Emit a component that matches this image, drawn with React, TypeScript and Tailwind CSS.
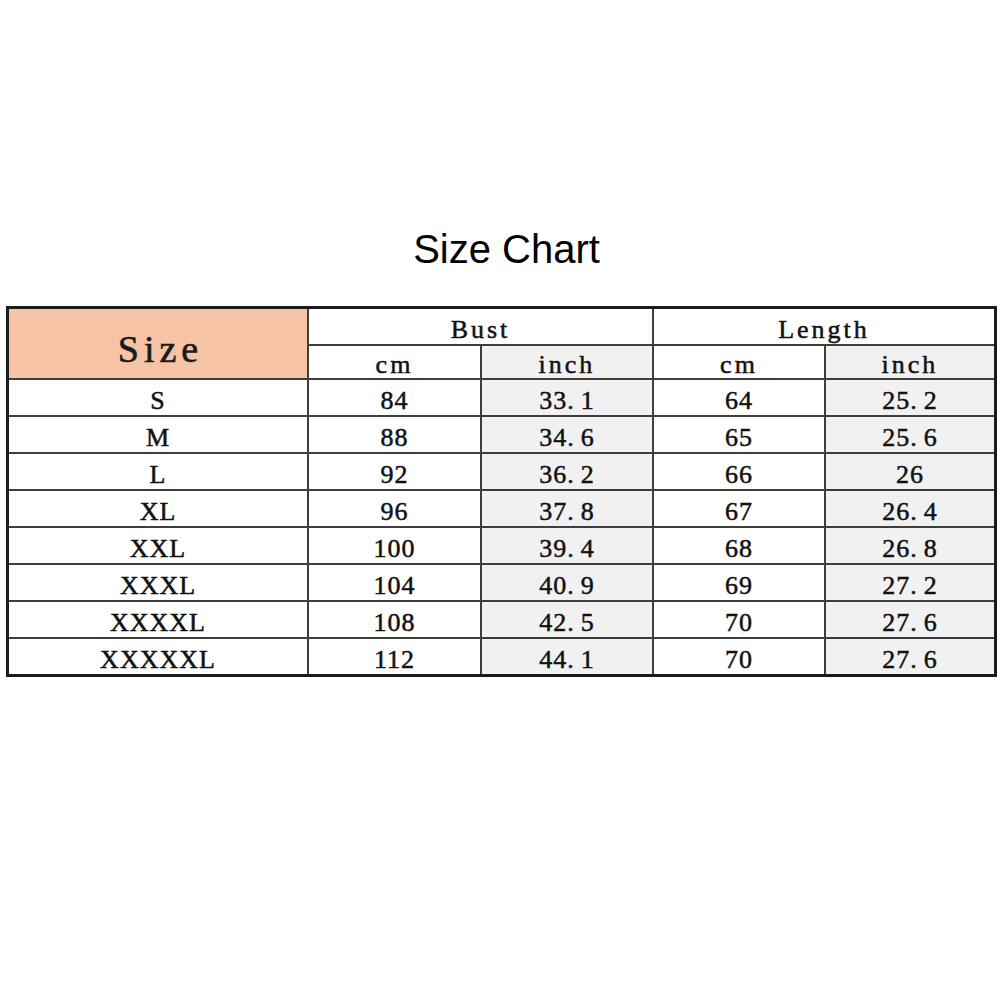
import clsx from 'clsx';

const rows = [
    { size: 'S', bustCm: '84', bustIn: '33.1', lenCm: '64', lenIn: '25.2' },
    { size: 'M', bustCm: '88', bustIn: '34.6', lenCm: '65', lenIn: '25.6' },
    { size: 'L', bustCm: '92', bustIn: '36.2', lenCm: '66', lenIn: '26' },
    { size: 'XL', bustCm: '96', bustIn: '37.8', lenCm: '67', lenIn: '26.4' },
    { size: 'XXL', bustCm: '100', bustIn: '39.4', lenCm: '68', lenIn: '26.8' },
    { size: 'XXXL', bustCm: '104', bustIn: '40.9', lenCm: '69', lenIn: '27.2' },
    { size: 'XXXXL', bustCm: '108', bustIn: '42.5', lenCm: '70', lenIn: '27.6' },
    { size: 'XXXXXL', bustCm: '112', bustIn: '44.1', lenCm: '70', lenIn: '27.6' },
];

// the source chart's font gives the decimal point a full digit cell
const Num = ({ value }: { value: string }) => {
    const [whole, dec] = value.split('.');
    if (dec === undefined) return <>{whole}</>;
    return (
        <>
            {whole}
            <span className="pr-[6px]">.</span>
            {dec}
        </>
    );
};

const Cell = ({ children, gray, className }: { children: React.ReactNode; gray?: boolean; className?: string }) => (
    <div
        className={clsx(
            'flex items-center justify-center pt-[6px] text-[26px] leading-none tracking-[1px] text-[#111] [-webkit-text-stroke:0.5px_#111]',
            gray ? 'bg-[#f1f1f1]' : 'bg-white',
            className,
        )}
    >
        {children}
    </div>
);

export default function App() {
    return (
        <div className="min-h-[1001px] w-[1001px] bg-white pt-[225px] font-['Liberation_Serif',serif]">
            <h1 className="pl-[12px] text-center font-['Liberation_Sans',Arial,sans-serif] text-[40px] leading-[48px] font-normal text-black">
                Size Chart
            </h1>

            <div className="mt-[33px] ml-[6px] grid w-[991px] grid-cols-[298px_171px_170px_170px_168px] grid-rows-[35px_32px_repeat(8,35px)] gap-[2px] border-[3px] border-[#1c1c1c] bg-[#3e3e3e]">
                <div className="row-span-2 flex items-center justify-center bg-[#f6c4a4] pt-[10px] pl-[5px] text-[38px] leading-none tracking-[5px] text-[#1a1a1a] [-webkit-text-stroke:0.6px_#1a1a1a]">
                    Size
                </div>
                <Cell className="col-span-2 tracking-[3px]">Bust</Cell>
                <Cell className="col-span-2 tracking-[3px]">Length</Cell>
                <Cell className="tracking-[3px]">cm</Cell>
                <Cell gray className="tracking-[3px]">
                    inch
                </Cell>
                <Cell className="tracking-[3px]">cm</Cell>
                <Cell gray className="tracking-[3px]">
                    inch
                </Cell>

                {rows.map((row, i) => (
                    <div key={row.size + i} className="contents">
                        <Cell className="text-[24px] tracking-[-1px]">{row.size}</Cell>
                        <Cell>{row.bustCm}</Cell>
                        <Cell gray>
                            <Num value={row.bustIn} />
                        </Cell>
                        <Cell>{row.lenCm}</Cell>
                        <Cell gray>
                            <Num value={row.lenIn} />
                        </Cell>
                    </div>
                ))}
            </div>
        </div>
    );
}
